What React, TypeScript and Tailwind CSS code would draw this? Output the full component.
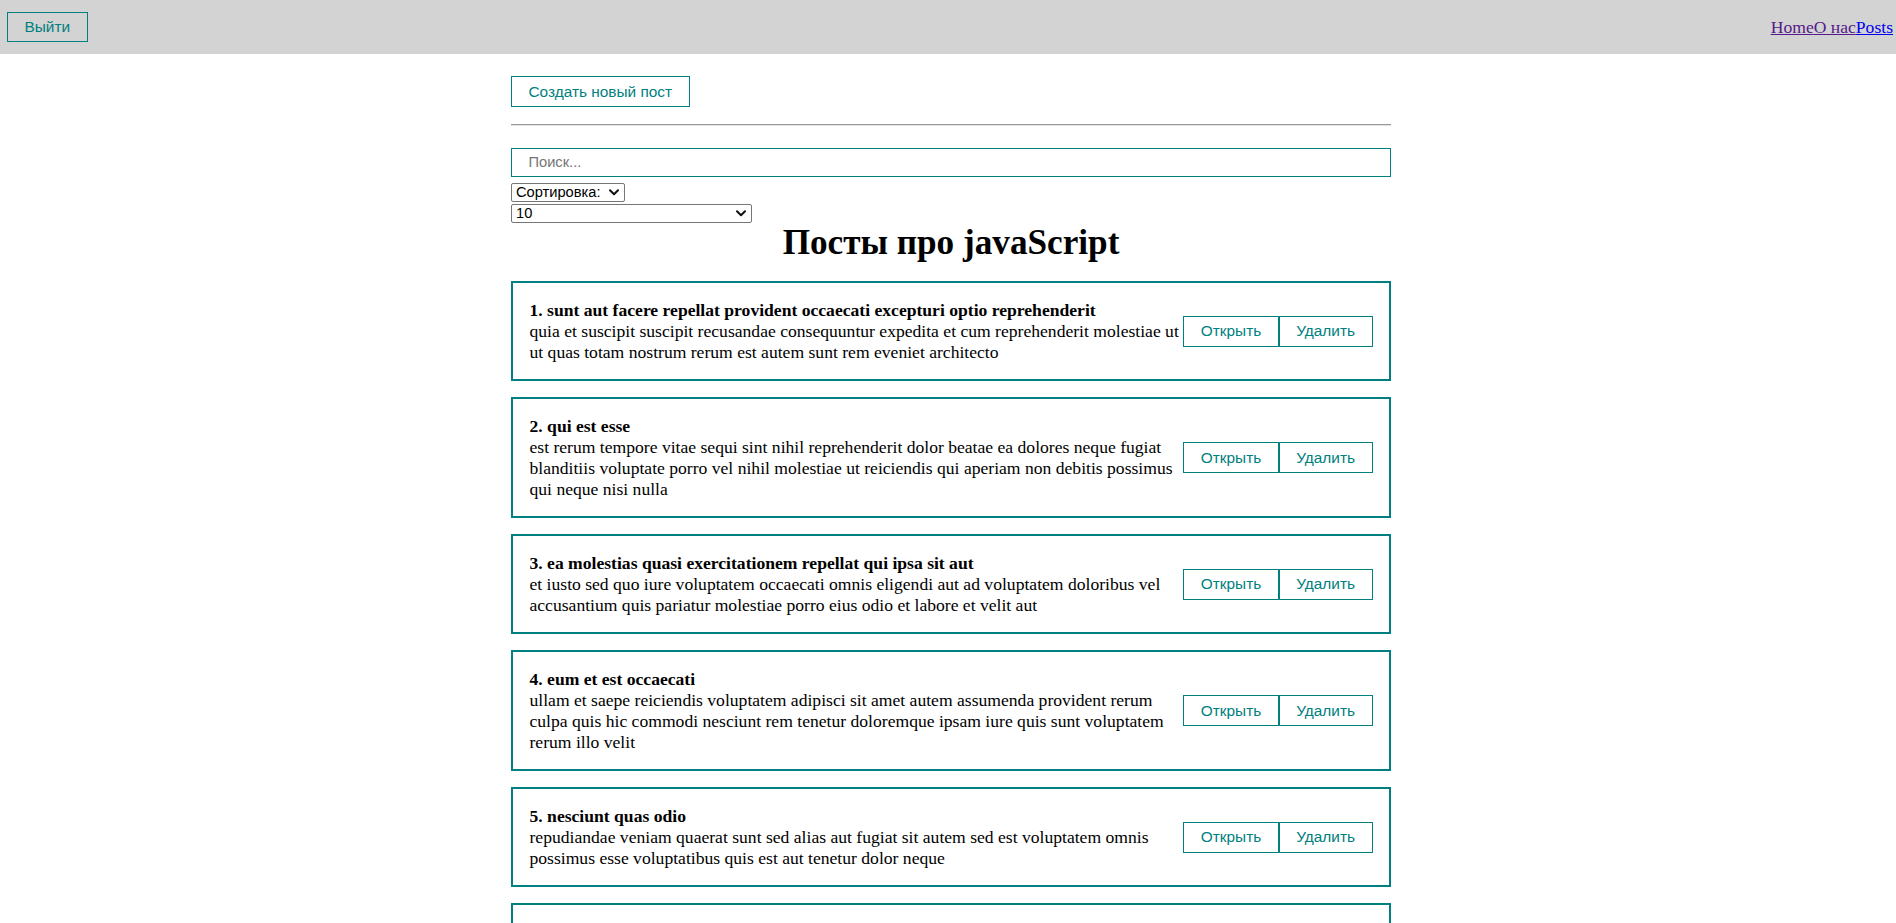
import React from "react";

const posts = [
  {
    id: 1,
    title: "sunt aut facere repellat provident occaecati excepturi optio reprehenderit",
    body: "quia et suscipit suscipit recusandae consequuntur expedita et cum reprehenderit molestiae ut ut quas totam nostrum rerum est autem sunt rem eveniet architecto",
  },
  {
    id: 2,
    title: "qui est esse",
    body: "est rerum tempore vitae sequi sint nihil reprehenderit dolor beatae ea dolores neque fugiat blanditiis voluptate porro vel nihil molestiae ut reiciendis qui aperiam non debitis possimus qui neque nisi nulla",
  },
  {
    id: 3,
    title: "ea molestias quasi exercitationem repellat qui ipsa sit aut",
    body: "et iusto sed quo iure voluptatem occaecati omnis eligendi aut ad voluptatem doloribus vel accusantium quis pariatur molestiae porro eius odio et labore et velit aut",
  },
  {
    id: 4,
    title: "eum et est occaecati",
    body: "ullam et saepe reiciendis voluptatem adipisci sit amet autem assumenda provident rerum culpa quis hic commodi nesciunt rem tenetur doloremque ipsam iure quis sunt voluptatem rerum illo velit",
  },
  {
    id: 5,
    title: "nesciunt quas odio",
    body: "repudiandae veniam quaerat sunt sed alias aut fugiat sit autem sed est voluptatem omnis possimus esse voluptatibus quis est aut tenetur dolor neque",
  },
  {
    id: 6,
    title: "dolorem eum magni eos aperiam quia",
    body: "ut aspernatur corporis harum nihil quis provident sequi mollitia nobis aliquid molestiae perspiciatis et ea nemo ab reprehenderit accusantium quas voluptate dolores velit et doloremque molestiae",
  },
  {
    id: 7,
    title: "magnam facilis autem",
    body: "dolore placeat quibusdam ea quo vitae magni quis enim qui quis quo nemo aut saepe quidem repellat excepturi ut quia sunt ut sequi eos ea sed quas",
  },
  {
    id: 8,
    title: "dolorem dolore est ipsam",
    body: "dignissimos aperiam dolorem qui eum facilis quibusdam animi sint suscipit qui sint possimus cum quaerat magni maiores excepturi ipsam ut commodi dolor voluptatum modi aut vitae",
  },
  {
    id: 9,
    title: "nesciunt iure omnis dolorem tempora et accusantium",
    body: "consectetur animi nesciunt iure dolore enim quia ad veniam autem ut quam aut nobis et est aut quod aut provident voluptas autem voluptas",
  },
  {
    id: 10,
    title: "optio molestias id quia eum",
    body: "quo et expedita modi cum officia vel magni doloribus qui repudiandae vero nisi sit quos veniam quod sed accusamus veritatis error",
  },
];

function Btn({ children, className = "" }: { children: React.ReactNode; className?: string }) {
  return (
    <button
      className={
        "shrink-0 cursor-pointer border border-[#008080] bg-transparent px-[16.5px] py-[5.5px] font-['Liberation_Sans',Arial,sans-serif] text-[15.4px] leading-[17.7px] text-[#008080] " +
        className
      }
    >
      {children}
    </button>
  );
}

function Chevron() {
  return (
    <svg width="10" height="7" viewBox="0 0 10 7" className="shrink-0">
      <path d="M1 1.2 L5 5.2 L9 1.2" fill="none" stroke="#111" strokeWidth="2" strokeLinecap="round" strokeLinejoin="round" />
    </svg>
  );
}

function FakeSelect({ label, width }: { label: string; width: string }) {
  return (
    <div
      className={
        "flex h-[19.5px] items-center justify-between rounded-[2px] border border-[#767676] bg-white pl-[4px] pr-[5.5px] font-['Liberation_Sans',Arial,sans-serif] text-[14.67px] leading-[17px] text-black " +
        width
      }
    >
      <span>{label}</span>
      <Chevron />
    </div>
  );
}

export default function App() {
  return (
    <div className="min-h-screen bg-white font-['Liberation_Serif','Times_New_Roman',serif] text-black">
      <nav className="flex h-[54px] items-center justify-between bg-[#d3d3d3] pl-[7px] pr-[3px]">
        <Btn>Выйти</Btn>
        <div className="flex text-[17.6px] leading-[20px]">
          <a href="#" className="text-[#551a8b] underline">Home</a>
          <a href="#" className="text-[#551a8b] underline">О нас</a>
          <a href="#" className="text-[#0000ee] underline">Posts</a>
        </div>
      </nav>

      <div className="pl-[6px]">
        <main className="mx-auto w-[880px]">
          <Btn className="mt-[22px]">Создать новый пост</Btn>
          <div className="mt-[17px] border-t border-b border-t-[#9a9a9a] border-b-[#e0e0e0]" />

          <input
            placeholder="Поиск..."
            className="mt-[22px] block h-[29px] w-full border border-[#008080] px-[16.5px] font-['Liberation_Sans',Arial,sans-serif] text-[14.67px] text-black outline-none placeholder:text-[#757575]"
          />
          <div className="mt-[6px] flex flex-col gap-[1.5px]">
            <FakeSelect label="Сортировка:" width="w-[114px]" />
            <FakeSelect label="10" width="w-[241px]" />
          </div>

          <h1 className="text-center text-[35.2px] font-bold leading-[40px]">Посты про javaScript</h1>

          <div className="mt-[18px] flex flex-col gap-[16px] pb-[30px]">
            {posts.map((p) => (
              <div
                key={p.id}
                className="flex items-center justify-between border-2 border-[#008080] p-[16.5px] text-[17.6px] leading-[21px]"
              >
                <div className="min-w-0 flex-1">
                  <strong className="font-bold">
                    {p.id}. {p.title}
                  </strong>
                  <div>{p.body}</div>
                </div>
                <div className="flex shrink-0">
                  <Btn>Открыть</Btn>
                  <Btn>Удалить</Btn>
                </div>
              </div>
            ))}
          </div>
        </main>
      </div>
    </div>
  );
}
